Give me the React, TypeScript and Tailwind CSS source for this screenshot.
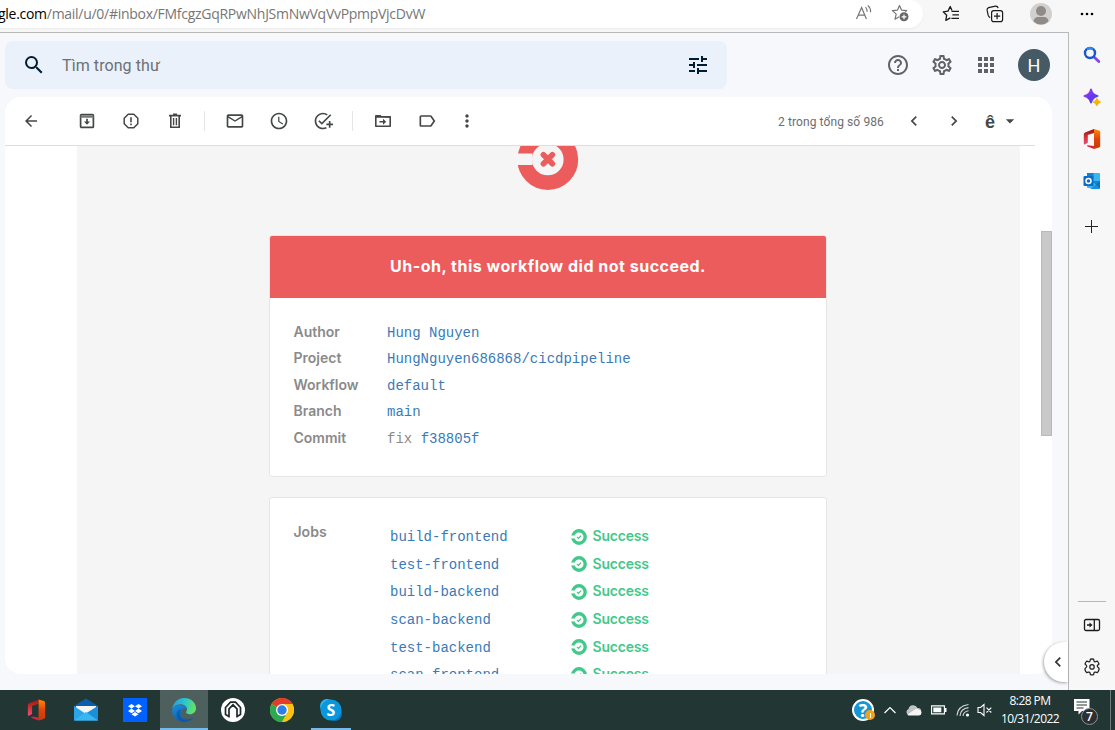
import React from "react";
import {
  MdSearch, MdTune, MdHelpOutline, MdOutlineSettings, MdApps, MdArrowBack,
  MdOutlineMail, MdAccessTime, MdAddTask, MdLabelOutline, MdMoreVert,
  MdChevronLeft, MdChevronRight, MdArrowDropDown,
} from "react-icons/md";

const Cell = ({ children, className = "w-11" }: { children?: React.ReactNode; className?: string }) => (
  <div className={`flex h-full shrink-0 items-center justify-center ${className}`}>{children}</div>
);

const Archive = () => (
  <svg width="16" height="16" viewBox="0 0 16 16" fill="none" stroke="#444746" strokeWidth="1.7">
    <rect x="1.6" y="1.6" width="12.8" height="12.8" rx="1" />
    <path d="M1.5 3.6h13" strokeWidth="2.2" stroke="#777" />
    <path d="M8 5.8v5" />
    <path d="M5 8.6h6L8 11.8z" fill="#444746" stroke="none" />
  </svg>
);
const Report = () => (
  <svg width="16" height="16" viewBox="0 0 16 16" fill="none" stroke="#444746" strokeWidth="1.5">
    <path d="M5.2 1.2h5.6l4 4v5.6l-4 4H5.2l-4-4V5.2z" strokeLinejoin="round" />
    <path d="M8 4.2v5M8 10.4v1.8" strokeWidth="1.6" />
  </svg>
);
const Trash = () => (
  <svg width="14" height="16" viewBox="0 0 14 16" fill="none" stroke="#444746" strokeWidth="1.6">
    <path d="M1 2.6h12M5 1.4h4" />
    <path d="M2.8 3v11.2h8.4V3" />
    <path d="M5.6 5v7.2M8.4 5v7.2" strokeWidth="1.4" />
  </svg>
);
const MoveTo = () => (
  <svg width="18" height="16" viewBox="0 0 18 16" fill="none" stroke="#444746" strokeWidth="1.6">
    <path d="M1.8 3.8h14.4v9.4H1.8z" strokeLinejoin="round" />
    <path d="M1 4.6V3q0-1 1-1h4.6l1.6 1.8H17v1z" fill="#444746" stroke="none" />
    <path d="M5.5 8.8h4" />
    <path d="M9 5.8l3.2 3-3.2 3z" fill="#444746" stroke="none" />
  </svg>
);

const EdgeGear = () => (
  <svg width="18" height="18" viewBox="0 0 18 18" fill="none" stroke="#222" strokeWidth="1.25" strokeLinejoin="round">
    <path d="M7.400 1.200Q9 .8 10.600 1.200L11 3q.4 1 1.500.700l1.800-.6q1.200 1.200 1.700 2.900l-1.400 1.300q-.8.800 0 1.600L16 10.300v1.500q-.5 1.700-1.700 2.800l-1.800-.5q-1.100-.3-1.500.7l-.4 1.900q-1.600.4-3.200 0L7 14.800q-.4-1-1.500-.7l-1.800.5Q2.500 13.500 2 11.800v-1.200l1.400-1.500q.8-.9 0-1.700L2 6q.5-1.700 1.700-2.900l1.800.6Q6.600 4 7 3z" />
    <circle cx="9" cy="8.900" r="2.200" />
  </svg>
);

const ReadAloud = () => (
  <svg width="18" height="18" viewBox="0 0 18 18" fill="none" stroke="#767676" strokeWidth="1.200">
    <path d="M1.5 15 6.6 3.5 11.4 15M3.2 11.2h6.6" />
    <path d="M10.500 3.200q1.800 1.800 1.600 4.600M12.800 1.400q3 2.600 2.800 6.800" />
  </svg>
);
const StarAdd = () => (
  <svg width="18" height="18" viewBox="0 0 18 18" fill="none" stroke="#767676" strokeWidth="1.2">
    <path d="M8.500 1.500l2 4.600 5.200.5-4 3.500 1 5.100-4.200-2.700-4.500 2.700 1.200-5.100-3.900-3.500 5.200-.5z" strokeLinejoin="round" />
    <circle cx="13" cy="12.800" r="5.200" fill="#fff" stroke="none" />
    <circle cx="13" cy="12.800" r="4.500" fill="#666" stroke="none" />
    <path d="M10.600 12.800h4.800M13 10.400v4.800" stroke="#fff" />
  </svg>
);
const StarList = () => (
  <svg width="18" height="18" viewBox="0 0 18 18" fill="none" stroke="#1b1b1b" strokeWidth="1.3" strokeLinejoin="round">
    <path d="M10 5.600 8.200 1.500 6 6.100l-4.800.7 3.500 3.400-.9 5.200 4.600-2.500" />
    <path d="M9.500 6.300h7.500M10.400 9.800h6.600M9.400 13.300h7.600" />
  </svg>
);
const Collections = () => (
  <svg width="18" height="18" viewBox="0 0 18 18" fill="none" stroke="#1b1b1b" strokeWidth="1.2">
    <path d="M4.200 12.600Q2.600 12 2.200 10.400L1.100 5.200Q.8 3.200 2.600 2.600L9.400 1.200q2.200-.2 2.800 2" />
    <rect x="5.600" y="5.600" width="11" height="11" rx="2.200" />
    <path d="M11.100 8v6.200M8 11.100h6.200" />
  </svg>
);

const Office = ({ className }: { className: string }) => (
  <svg className={className} viewBox="0 0 18 20">
    <defs>
      <linearGradient id="officeLeft" x1="0" y1="0" x2="0" y2="1">
        <stop offset="0" stopColor="#a30f12" /><stop offset="0.6" stopColor="#d43a3a" /><stop offset="1" stopColor="#ee4b8a" />
      </linearGradient>
      <linearGradient id="officeRight" x1="0" y1="0" x2="0" y2="1">
        <stop offset="0" stopColor="#ff8a0a" /><stop offset="0.5" stopColor="#e0440a" /><stop offset="1" stopColor="#c8380a" />
      </linearGradient>
    </defs>
    <path d="M11 0 2 3.6Q.8 4.2.8 5.6v8.6q0 1.4 1 1.2l3-1.6V6L11 4z" fill="url(#officeLeft)" />
    <path d="M4.6 16.2 11 17v3l-6.4-2.4q-1.4-1 0-1.4z" fill="#e2203f" />
    <path d="M11 0l5 1.5q1.2.4 1.2 1.6v13.8q0 1.2-1.2 1.6L11 20z" fill="url(#officeRight)" />
  </svg>
);

const SidebarSearch = () => (
  <svg width="18" height="18" viewBox="0 0 18 18" fill="none">
    <path d="m11 11 4.800 4.600" stroke="#8a45e0" strokeWidth="2.8" strokeLinecap="round" />
    <circle cx="7" cy="7" r="5" stroke="#1857d0" strokeWidth="2.4" />
    <path d="M4 3.4a5 5 0 0 1 6 0" stroke="#2f8dea" strokeWidth="2.4" />
  </svg>
);
const Sparkle = () => (
  <svg width="18" height="18" viewBox="0 0 18 18">
    <defs>
      <linearGradient id="sparkle" x1="0" y1="0" x2="1" y2="1">
        <stop offset="0" stopColor="#b83df5" /><stop offset="0.5" stopColor="#6a36f0" /><stop offset="1" stopColor="#3f4cf0" />
      </linearGradient>
    </defs>
    <path d="M8 .5q.8 0 1.1 1.2 1 4.2 5.4 5.4 1.1.4 1.1.9t-1.1.9q-4.4 1.2-5.4 5.4-.3 1.2-1.1 1.2t-1.1-1.2Q5.9 10.100 1.500 8.900.4 8.500.4 8t1.100-.9Q5.900 5.900 6.900 1.700 7.200.5 8 .5z" fill="url(#sparkle)" />
    <path d="M13.800 10.400q.9 2.800 3.700 3.700-2.800.9-3.700 3.700-.9-2.800-3.700-3.700 2.800-.9 3.700-3.700z" fill="#f5b400" stroke="#f5b400" />
  </svg>
);
const Outlook = () => (
  <svg width="18" height="18" viewBox="0 0 18 18">
    <rect x="4" y="1" width="13" height="15" rx="1" fill="#35b8f1" />
    <path d="M4 1h6.500v5H4z" fill="#1480d0" />
    <path d="M8 16.500 17 9v7q0 1-1 1H6z" fill="#1490df" />
    <path d="M9 9l8 7.600V9z" fill="#0f5fa8" opacity=".6" />
    <rect x="0.500" y="4" width="10" height="10" rx="1" fill="#0a6cc4" />
    <circle cx="5.500" cy="9" r="2.500" fill="none" stroke="#fff" strokeWidth="1.500" />
  </svg>
);

const FailedLogo = () => (
  <svg width="64" height="64" viewBox="0 0 64 64" className="-mt-[18px] ml-[439px] block">
    <circle cx="31.800" cy="31.500" r="23.100" fill="none" stroke="#ed5c5c" strokeWidth="14.600" />
    <path d="M0 25.600h16.500v11.300H0z" fill="#f5f5f5" />
    <path d="m27.400 26.800 9 9m0-9-9 9" stroke="#ed5c5c" strokeWidth="5.600" strokeLinecap="round" />
  </svg>
);
const SuccessIcon = () => (
  <svg width="16" height="16" viewBox="0 0 16 16" className="shrink-0">
    <circle cx="8" cy="8" r="6.200" fill="none" stroke="#42c88a" strokeWidth="3.400" />
    <path d="M0 6.500h4.200v2.900H0z" fill="#fff" />
    <path d="m6 8 1.500 1.400L10.100 6.600" fill="none" stroke="#42c88a" strokeWidth="1.300" />
  </svg>
);

const MailApp = () => (
  <svg width="24" height="24" viewBox="0 0 24 24">
    <path d="M0 8 12 .5 24 8v4H0z" fill="#0a5cad" />
    <path d="M2 8h20v9H2z" fill="#f4f4f4" />
    <path d="M0 8l12 8L24 8v14.500H0z" fill="#2aa5e8" />
    <path d="M24 8v14.500L12.500 15z" fill="#1c8fd8" />
    <path d="M0 22.500 12 14l12 8.500z" fill="#38b6f2" />
  </svg>
);
const Dropbox = () => (
  <svg width="24" height="24" viewBox="0 0 24 24">
    <path d="M0 0h24v24H0z" fill="#0061fe" />
    <path d="m8.500 6 3.500 2.300-3.500 2.300L5 8.300zm7 0L19 8.300l-3.500 2.300L12 8.300zm-7 4.600 3.500 2.300-3.500 2.300L5 12.900zm7 0 3.500 2.300-3.500 2.300-3.500-2.300zM12 13.900l3.500 2.300-3.500 2.300-3.500-2.300z" fill="#fff" />
  </svg>
);
const EdgeLogo = () => (
  <svg width="24" height="24" viewBox="0 0 24 24">
    <defs>
      <linearGradient id="edgeTop" x1="0" y1="0.300" x2="1" y2="0.500">
        <stop offset="0" stopColor="#1f9de6" /><stop offset="0.500" stopColor="#2cc6cf" /><stop offset="1" stopColor="#66e35c" />
      </linearGradient>
      <linearGradient id="edgeLow" x1="0" y1="0" x2="0.600" y2="1">
        <stop offset="0" stopColor="#1b8ee0" /><stop offset="1" stopColor="#0c59a4" />
      </linearGradient>
    </defs>
    <path d="M.2 11C1 4.500 6 0 12.200 0 19 0 24 4.600 24 10.200c0 3.600-2.700 6-6 6-2.300 0-4-.8-4-1.900 0-.7 1-1.200 1-3C15 8.500 12 6.300 8.500 6.300 4.500 6.300 1.500 8.500.2 11z" fill="url(#edgeTop)" />
    <path d="M.1 11.500C1.500 8.500 5 7 8.300 7c3.700 0 6.300 2 6.700 4-3-1.300-6.200.5-6.200 4 0 4 3.500 6.500 7.500 6.200 2.600-.2 4.600-1.200 6-2.600C20.300 22 16.500 24 12.200 24 5.500 24-.6 18.500.1 11.500z" fill="url(#edgeLow)" />
    <path d="M9 11.500c-3 4.500-.2 11.300 6 12C8.500 24.500 4.500 20 4.700 16c.1-2.400 1.800-4.200 4.300-4.500z" fill="#0c4f9c" opacity=".6" />
  </svg>
);
const HouseApp = () => (
  <svg width="24" height="24" viewBox="0 0 24 24">
    <circle cx="12" cy="12" r="12" fill="#fff" />
    <path d="M4.500 17V9.500L9.500 4.200h5l5 5.300V17M8 19.500V10.800L12 6.800l4 4v8.700M4.500 16.500 8 18.500M19.500 16.500 16 18.500" fill="none" stroke="#1e2b29" strokeWidth="1.700" />
  </svg>
);
const Chrome = () => (
  <svg width="24" height="24" viewBox="0 0 24 24">
    <circle cx="12" cy="12" r="12" fill="#fbc116" />
    <path d="M12 12 1.600 6A12 12 0 0 1 22.400 6z" fill="#e33b2e" />
    <path d="M12 6h10.400A12 12 0 0 0 12 0z" fill="#e33b2e" />
    <path d="M1.600 6A12 12 0 0 0 12 24l5.200-9z M1.600 6l5.200 9h6z" fill="#2da94f" />
    <path d="M12 24A12 12 0 0 0 22.400 6H12l5.200 9z" fill="#fbc116" />
    <circle cx="12" cy="12" r="6" fill="#fff" />
    <circle cx="12" cy="12" r="4.700" fill="#2f7de9" />
  </svg>
);
const Skype = () => (
  <div className="relative flex h-6 w-6 items-center justify-center">
    <svg className="absolute inset-0" width="24" height="24" viewBox="0 0 24 24">
      <circle cx="8" cy="8" r="7" fill="#2cb5f4" />
      <circle cx="16" cy="16" r="7" fill="#0872c4" />
      <circle cx="12" cy="12" r="10.500" fill="#0998de" />
    </svg>
    <span className="relative font-['Open_Sans',sans-serif] text-[16px] leading-none font-bold text-white">S</span>
  </div>
);

const details = [
  { label: "Author", value: "Hung Nguyen" },
  { label: "Project", value: "HungNguyen686868/cicdpipeline" },
  { label: "Workflow", value: "default" },
  { label: "Branch", value: "main" },
  { label: "Commit", prefix: "fix", value: "f38805f" },
];
const jobs = ["build-frontend", "test-frontend", "build-backend", "scan-backend", "test-backend", "scan-frontend"];

const BrowserBar = () => (
  <header className="flex h-8 shrink-0 items-start bg-[#f7f7f7]">
    <div className="flex h-7 w-[923px] items-center rounded-r-[14px] bg-white shadow-[0_1px_2px_#0000000d]">
      <div className="-mt-[2px] -ml-[2px] w-[857px] font-['Open_Sans',sans-serif] text-[14px] tracking-[-0.28px] whitespace-nowrap text-[#767676]">
        <span className="text-black">gle.com</span>/mail/u/0/#inbox/FMfcgzGqRPwNhJSmNwVqVvPpmpVjcDvW
      </div>
      <div className="flex gap-[18px] pb-[2px]"><ReadAloud /><StarAdd /></div>
    </div>
    <div className="flex h-7 items-center pb-px pl-[19px]">
      <StarList />
      <div className="ml-[26px]"><Collections /></div>
      <svg className="ml-[26px]" width="22" height="22" viewBox="0 0 22 22">
        <circle cx="11" cy="11" r="11" fill="#d2d0ce" />
        <circle cx="11" cy="8" r="5" fill="#8f8b88" />
        <path d="M3.500 18.500Q4 14 8 14h6q4 0 4.500 4.500A11 11 0 0 1 3.500 18.500z" fill="#8f8b88" />
      </svg>
      <svg className="ml-[28px]" width="14" height="4" viewBox="0 0 14 4">
        <circle cx="2" cy="2" r="1.300" /><circle cx="7" cy="2" r="1.300" /><circle cx="12" cy="2" r="1.300" />
      </svg>
    </div>
  </header>
);

const MailToolbar = () => (
  <div className="flex h-12 shrink-0 items-center text-[#444746]">
    <Cell className="ml-1 w-11"><MdArrowBack size={18} /></Cell>
    <Cell className="ml-3 w-11"><Archive /></Cell>
    <Cell><Report /></Cell>
    <Cell><Trash /></Cell>
    <Cell className="w-4 pr-[2px]"><i className="h-5 w-px bg-[#e3e5e8]" /></Cell>
    <Cell><MdOutlineMail size={20} /></Cell>
    <Cell><MdAccessTime size={20} /></Cell>
    <Cell><MdAddTask size={20} /></Cell>
    <Cell className="w-4 pr-[2px]"><i className="h-5 w-px bg-[#e3e5e8]" /></Cell>
    <Cell><MoveTo /></Cell>
    <Cell className="w-11 pr-px"><MdLabelOutline size={20} /></Cell>
    <Cell className="w-9"><MdMoreVert size={20} /></Cell>
    <div className="ml-[293px] w-[107px] pt-px font-[Roboto,sans-serif] text-[12px] tracking-[0.100px] whitespace-nowrap text-[#6b6e72]">2 trong tổng số 986</div>
    <Cell className="ml-[9px] w-10"><MdChevronLeft size={20} /></Cell>
    <Cell className="w-10"><MdChevronRight size={20} /></Cell>
    <div className="ml-[11px] w-[11px] pt-[2px] font-['Liberation_Sans',sans-serif] text-[18px] leading-5 font-bold">ê</div>
    <MdArrowDropDown size={20} className="ml-[4px]" />
  </div>
);

const MessageBody = () => (
  <div className="flex min-h-0 flex-1 flex-col">
    <div className="h-px w-[1030px] shrink-0 bg-[#dedede]" />
    <div className="flex min-h-0 flex-1">
      <div className="ml-[72px] w-[943px] overflow-hidden bg-[#f5f5f5] font-[Inter,sans-serif]">
        <FailedLogo />
        <section className="mt-[43px] ml-[192px] h-[242px] w-[558px] rounded-[3px] border border-[#e6e6e6] bg-white">
          <h1 className="flex h-[62px] items-center justify-center rounded-t-[2px] bg-[#ed5c5c] pb-[2px] text-[16px] font-bold tracking-[0.500px] text-white">
            Uh-oh, this workflow did not succeed.
          </h1>
          <dl className="pt-[21px] pl-[23.500px]">
            {details.map((d) => (
              <div key={d.label} className="flex h-[26.500px] items-center">
                <dt className="w-[93.500px] pb-[2px] text-[14px] font-semibold text-[#8a8a8a]">{d.label}</dt>
                <dd className="pt-[2px] font-['Liberation_Mono',monospace] text-[14px] text-[#3a7ab8]">
                  {d.prefix && <span className="text-[#8a8a8a]">{d.prefix} </span>}
                  {d.value}
                </dd>
              </div>
            ))}
          </dl>
        </section>
        <section className="mt-5 ml-[192px] flex h-[300px] w-[558px] rounded-[3px] border border-[#e6e6e6] bg-white pl-[23.500px]">
          <h2 className="w-[96.500px] pt-[23px] text-[14px] font-semibold text-[#8a8a8a]">Jobs</h2>
          <ul className="pt-[25px]">
            {jobs.map((job) => (
              <li key={job} className="flex h-[27.600px] items-center">
                <span className="w-[181px] pt-[2px] font-['Liberation_Mono',monospace] text-[14px] text-[#3a7ab8]">{job}</span>
                <SuccessIcon />
                <span className="ml-[5.500px] pb-[2px] text-[14px] font-semibold tracking-[-0.200px] text-[#42c88a]">Success</span>
              </li>
            ))}
          </ul>
        </section>
      </div>
      <div className="mt-[85px] ml-[21px] h-[205px] w-[11px] self-start border border-[#b9b9b9] bg-[#c9c9c9]" />
    </div>
  </div>
);

const Gmail = () => (
  <main className="relative flex w-[1069px] shrink-0 flex-col border-t border-r border-[#b8b8b8] bg-[#f6f8fc] pl-[5px]">
    <div className="mt-2 flex h-12 shrink-0 items-center">
      <div className="flex h-12 w-[722px] items-center rounded-lg bg-[#eaf1fb] pr-[17px] pl-[17px] text-[#001d35]">
        <MdSearch size={24} />
        <span className="ml-[16px] flex-1 pt-[2px] font-[Roboto,sans-serif] text-[16px] tracking-[0.080px] text-[#6d7074]">Tìm trong thư</span>
        <MdTune size={24} />
      </div>
      <div className="ml-[149px] flex items-center text-[#5f6368]">
        <Cell><MdHelpOutline size={24} /></Cell>
        <Cell><MdOutlineSettings size={24} /></Cell>
        <Cell><MdApps size={24} /></Cell>
        <div className="ml-[10px] flex h-8 w-8 items-center justify-center rounded-full bg-[#455a64] font-[Roboto,sans-serif] text-[18px] text-white">H</div>
      </div>
    </div>
    <div className="mt-2 flex h-[577px] w-[1047px] flex-col overflow-hidden rounded-[16px] bg-white">
      <MailToolbar />
      <MessageBody />
    </div>
    <div className="absolute right-0 bottom-2 flex h-10 w-6 items-center justify-center rounded-l-full bg-white pl-1 text-[#333] shadow-[-1px_1px_3px_#00000055]">
      <MdChevronLeft size={20} />
    </div>
  </main>
);

const Sidebar = () => (
  <aside className="flex flex-1 flex-col items-center bg-[#f7f7f7]">
    <div className="mt-[14px] flex flex-col items-center gap-6">
      <SidebarSearch />
      <Sparkle />
      <Office className="-my-px h-[20px] w-[18px]" />
      <Outlook />
    </div>
    <svg className="mt-[30px] mr-[2px]" width="13" height="13" viewBox="0 0 13 13"><path d="M6.500 0v13M0 6.500h13" stroke="#222" /></svg>
    <div className="mt-[368px] h-px w-7 bg-[#b8b8b8]" />
    <svg className="mt-4" width="18" height="14" viewBox="0 0 18 14" fill="none" stroke="#1b1b1b" strokeWidth="1.300">
      <rect x="1.500" y="1.500" width="15" height="11" rx="1.500" /><path d="M11.300 1.500v11M4 7h4" /><path d="m6.500 4.500 3 2.500-3 2.500z" fill="#1b1b1b" stroke="none" />
    </svg>
    <div className="mt-[26px]"><EdgeGear /></div>
  </aside>
);

const Taskbar = () => (
  <footer className="flex h-10 shrink-0 items-center bg-[#223733] text-white">
    <div className="flex h-full gap-px pl-[13px]">
      <Cell className="w-12 pr-[2px]"><Office className="h-[22px] w-[19px]" /></Cell>
      <Cell className="w-12"><MailApp /></Cell>
      <Cell className="w-12"><Dropbox /></Cell>
      <Cell className="w-12 border-t-2 border-b-2 border-t-transparent border-b-[#76b9ed] bg-[#4e605d]"><EdgeLogo /></Cell>
      <Cell className="w-12"><HouseApp /></Cell>
      <Cell className="w-12"><Chrome /></Cell>
      <Cell className="mx-1 w-10 border-t-2 border-b-2 border-t-transparent border-b-[#76b9ed]"><Skype /></Cell>
    </div>
    <div className="ml-[497px] flex h-full items-center font-['Open_Sans',sans-serif]">
      <div className="relative flex h-[22px] w-[22px] items-center justify-center rounded-full border-2 border-white bg-[#1497d5] text-[18px] leading-none font-bold">
        ?
        <span className="absolute -right-[3px] -bottom-[1px] flex h-[10px] w-[10px] items-center justify-center rounded-full bg-[#f0a21c]"><i className="h-[5px] w-px bg-white" /></span>
      </div>
      <svg className="ml-[10px]" width="12" height="8" viewBox="0 0 12 8" fill="none" stroke="#fff" strokeWidth="1.200"><path d="m.5 7 5.500-5.500L11.500 7" /></svg>
      <svg className="ml-[9px]" width="17" height="12" viewBox="0 0 17 12">
        <path d="M3.500 11a3.200 3.200 0 0 1 0-6A4.800 4.800 0 0 1 12.500 4 3.500 3.500 0 0 1 13 11z" fill="#bfc3c2" />
        <path d="M2.500 10.500 10 5.500q2-1.500 4 .2 2.500.5 2.500 3T14 11.500H4q-1.500 0-1.500-1z" fill="#f5f5f5" />
      </svg>
      <svg className="ml-[9px]" width="16" height="10" viewBox="0 0 16 10"><path d="M.6.900h12.800v8H.6z" fill="none" stroke="#fff" strokeWidth="1.100" /><path d="M2.300 2.600h8v4.700h-8zM14 3h1.500v4H14z" fill="#fff" /></svg>
      <svg className="ml-[9px]" width="14" height="14" viewBox="0 0 14 14" fill="none" stroke="#fff" strokeWidth="1.100">
        <path d="M1 12.500Q1.500 3 12.500 1.500M4 13Q4.500 5.500 12.500 4.600M7 13Q7.500 8.500 12.500 7.700" opacity=".8" /><circle cx="11.500" cy="12" r="1.600" fill="#fff" stroke="none" />
      </svg>
      <svg className="ml-[7px]" width="16" height="14" viewBox="0 0 16 14" fill="none" stroke="#fff" strokeWidth="1.100"><path d="M1 4.500h2.500L7 1.500v11L3.500 9.500H1zM9.500 4.700l4.800 4.800m0-4.800L9.500 9.500" /></svg>
      <div className="ml-[6px] w-[62px] text-center text-[12px] leading-[18px] tracking-[-0.550px] whitespace-nowrap">
        <div>8:28 PM</div>
        <div>10/31/2022</div>
      </div>
      <div className="relative ml-[12px] h-6 w-6">
        <svg width="18" height="17" viewBox="0 0 18 17"><path d="M1 1h15.500v12H9l-3.500 3.500V13H1z" fill="#fff" /><path d="M3.500 4h10.500M3.500 7h10.500M3.500 10h7" stroke="#223733" /></svg>
        <span className="absolute top-[10px] left-[8px] flex h-[17px] w-[17px] items-center justify-center rounded-full border border-[#8d9291] bg-[#2c2f31] text-[12px] leading-none font-semibold">7</span>
      </div>
      <div className="ml-[13px] h-full w-px bg-[#6f7d7a]" />
    </div>
  </footer>
);

export default function App() {
  return (
    <div className="flex h-[730px] w-[1115px] flex-col overflow-hidden">
      <BrowserBar />
      <div className="flex min-h-0 flex-1"><Gmail /><Sidebar /></div>
      <Taskbar />
    </div>
  );
}
